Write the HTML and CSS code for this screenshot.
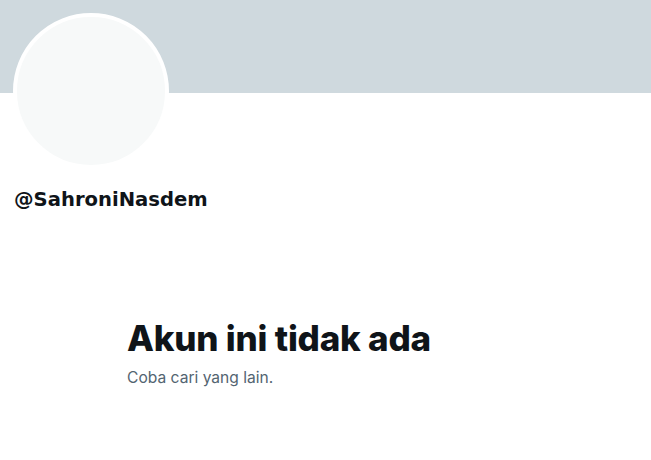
FILE: index.html
```html
<!DOCTYPE html>
<html lang="id">
<head>
<meta charset="utf-8">
<link rel="stylesheet" href="styles.css">
</head>
<body>
<div class="banner"></div>
<div class="profile">
  <div class="avatar"></div>
  <div class="handle">@SahroniNasdem</div>
</div>
<div class="empty">
  <h1 class="title">Akun ini tidak ada</h1>
  <p class="sub">Coba cari yang lain.</p>
</div>
</body>
</html>
```
FILE: styles.css
```css
html, body {
  margin: 0;
  padding: 0;
  background: #ffffff;
}
body {
  font-family: "Inter", "Liberation Sans", sans-serif;
  color: #0f1419;
}
.banner {
  height: 93px;
  background: #cfd9de;
}
.profile {
  padding: 0 13px;
}
.avatar {
  width: 148px;
  height: 148px;
  border: 4px solid #ffffff;
  border-radius: 50%;
  background: #f7f9f9;
  margin-top: -80px;
}
.handle {
  margin-top: 19px;
  font-family: "DejaVu Sans", sans-serif;
  font-weight: 700;
  font-size: 19.6px;
  line-height: 24px;
  padding-left: 1px;
}
.empty {
  padding-left: 127px;
  margin-top: 106px;
}
.title {
  margin: 0;
  font-family: "Inter", sans-serif;
  font-weight: 800;
  font-size: 35px;
  line-height: 40px;
  letter-spacing: -0.2px;
}
.sub {
  margin: 10px 0 0;
  font-family: "Inter", sans-serif;
  font-size: 15.6px;
  line-height: 20px;
  color: #536471;
}
```
